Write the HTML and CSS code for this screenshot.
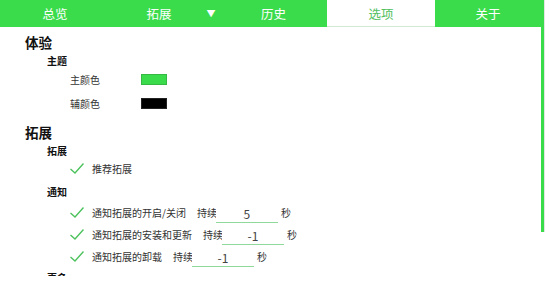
FILE: index.html
```html
<!DOCTYPE html>
<html lang="zh-CN">
<head>
  <meta charset="UTF-8" />
  <title>选项</title>
  <link rel="stylesheet" href="styles.css">
</head>
<body>
  <div class="app">
    <div class="main">
      <!-- 导航 -->
      <nav class="tabs">
        <div class="tab">总览</div>
        <div class="tab tab-menu"><span>拓展</span><span class="arrow">▼</span></div>
        <div class="tab">历史</div>
        <div class="tab active">选项</div>
        <div class="tab">关于</div>
      </nav>

      <div class="content">
        <h2>体验</h2>
        <h3>主题</h3>
        <div class="list colors">
          <div class="row"><span class="label">主颜色</span><span class="swatch green"></span></div>
          <div class="row"><span class="label">辅颜色</span><span class="swatch black"></span></div>
        </div>

        <h2 class="sec">拓展</h2>
        <h3>拓展</h3>
        <div class="list tight">
          <div class="row"><span class="check"></span><span>推荐拓展</span></div>
        </div>

        <h3 class="sub">通知</h3>
        <div class="list">
          <div class="row">
            <span class="check"></span><span>通知拓展的开启/关闭</span>
            <span class="dur">持续</span><input class="num" type="text" value="5"><span class="unit">秒</span>
          </div>
          <div class="row">
            <span class="check"></span><span>通知拓展的安装和更新</span>
            <span class="dur">持续</span><input class="num" type="text" value="-1"><span class="unit">秒</span>
          </div>
          <div class="row">
            <span class="check"></span><span>通知拓展的卸载</span>
            <span class="dur">持续</span><input class="num" type="text" value="-1"><span class="unit">秒</span>
          </div>
        </div>

        <h3 class="sub last">更多</h3>
      </div>
    </div>
    <div class="scrollbar"></div>
  </div>
</body>
</html>
```

FILE: styles.css
```css
/* 基本样式 */
body {
  margin: 0;
  font-family: "Noto Sans CJK SC", "Noto Sans", sans-serif;
  background: #fff;
  color: #333;
  overflow: hidden;
}

.app {
  display: flex;
  height: 287px;
}

.main {
  width: 541px;
  height: 276px;
  overflow: hidden;
}

.scrollbar {
  width: 3px;
  height: 232px;
  background: #3bdc4b;
  border-right: 1px solid #e4e4e4;
}

/* 导航 */
.tabs {
  display: grid;
  grid-template-columns: 110px 110px 107px 108px 106px;
  height: 27px;
  background: #3bdc4b;
  width: 543px;
}

.tab {
  display: flex;
  align-items: center;
  justify-content: center;
  color: #fff;
  font-size: 12.5px;
}

.tab-menu {
  padding-left: 32px;
  gap: 35px;
}

.arrow {
  font-size: 9px;
}

.tab.active {
  background: #fff;
  color: #4fc05d;
  border-bottom: 1px solid #cfe9d2;
}

/* 内容 */
.content {
  padding-left: 25px;
}

h2 {
  margin: 5px 0 0;
  font-size: 13.5px;
  line-height: 20px;
  color: #111;
}

h2.sec {
  margin-top: 7px;
}

h3 {
  margin: 2px 0 0 22px;
  font-size: 10px;
  line-height: 14px;
  color: #111;
}

h3.sub {
  margin-top: 6px;
}

h3.last {
  margin-top: 4px;
}

.list {
  margin: 2px 0 0 45px;
}

.list.colors,
.list.tight {
  margin-top: -1px;
}

.row {
  display: flex;
  align-items: center;
  height: 22px;
  font-size: 10px;
}

.colors .row {
  height: 24px;
}

.label {
  width: 71px;
}

.swatch {
  width: 26px;
  height: 11px;
  border: 1px solid #222;
  box-sizing: border-box;
}

.swatch.green {
  background: #3bdc4b;
  border-color: #35b844;
}

.swatch.black {
  background: #000;
}

.check {
  width: 14px;
  height: 11px;
  margin-right: 8px;
  background: url("data:image/svg+xml,%3Csvg xmlns='http://www.w3.org/2000/svg' width='14' height='11' viewBox='0 0 14 11'%3E%3Cpath d='M0.5 6 L5 10 L13.5 0.5' fill='none' stroke='%234cc25c' stroke-width='1.4'/%3E%3C/svg%3E") no-repeat;
}

.dur {
  margin-left: 11px;
}

.num {
  width: 62px;
  height: 16px;
  margin: 4px 0 0 -1px;
  padding: 0;
  border: none;
  border-bottom: 1px solid #8fd99a;
  font: 12px "Noto Sans CJK SC", "Noto Sans", sans-serif;
  color: #444;
  text-align: center;
  outline: none;
}

.unit {
  margin-left: 3px;
}
```
